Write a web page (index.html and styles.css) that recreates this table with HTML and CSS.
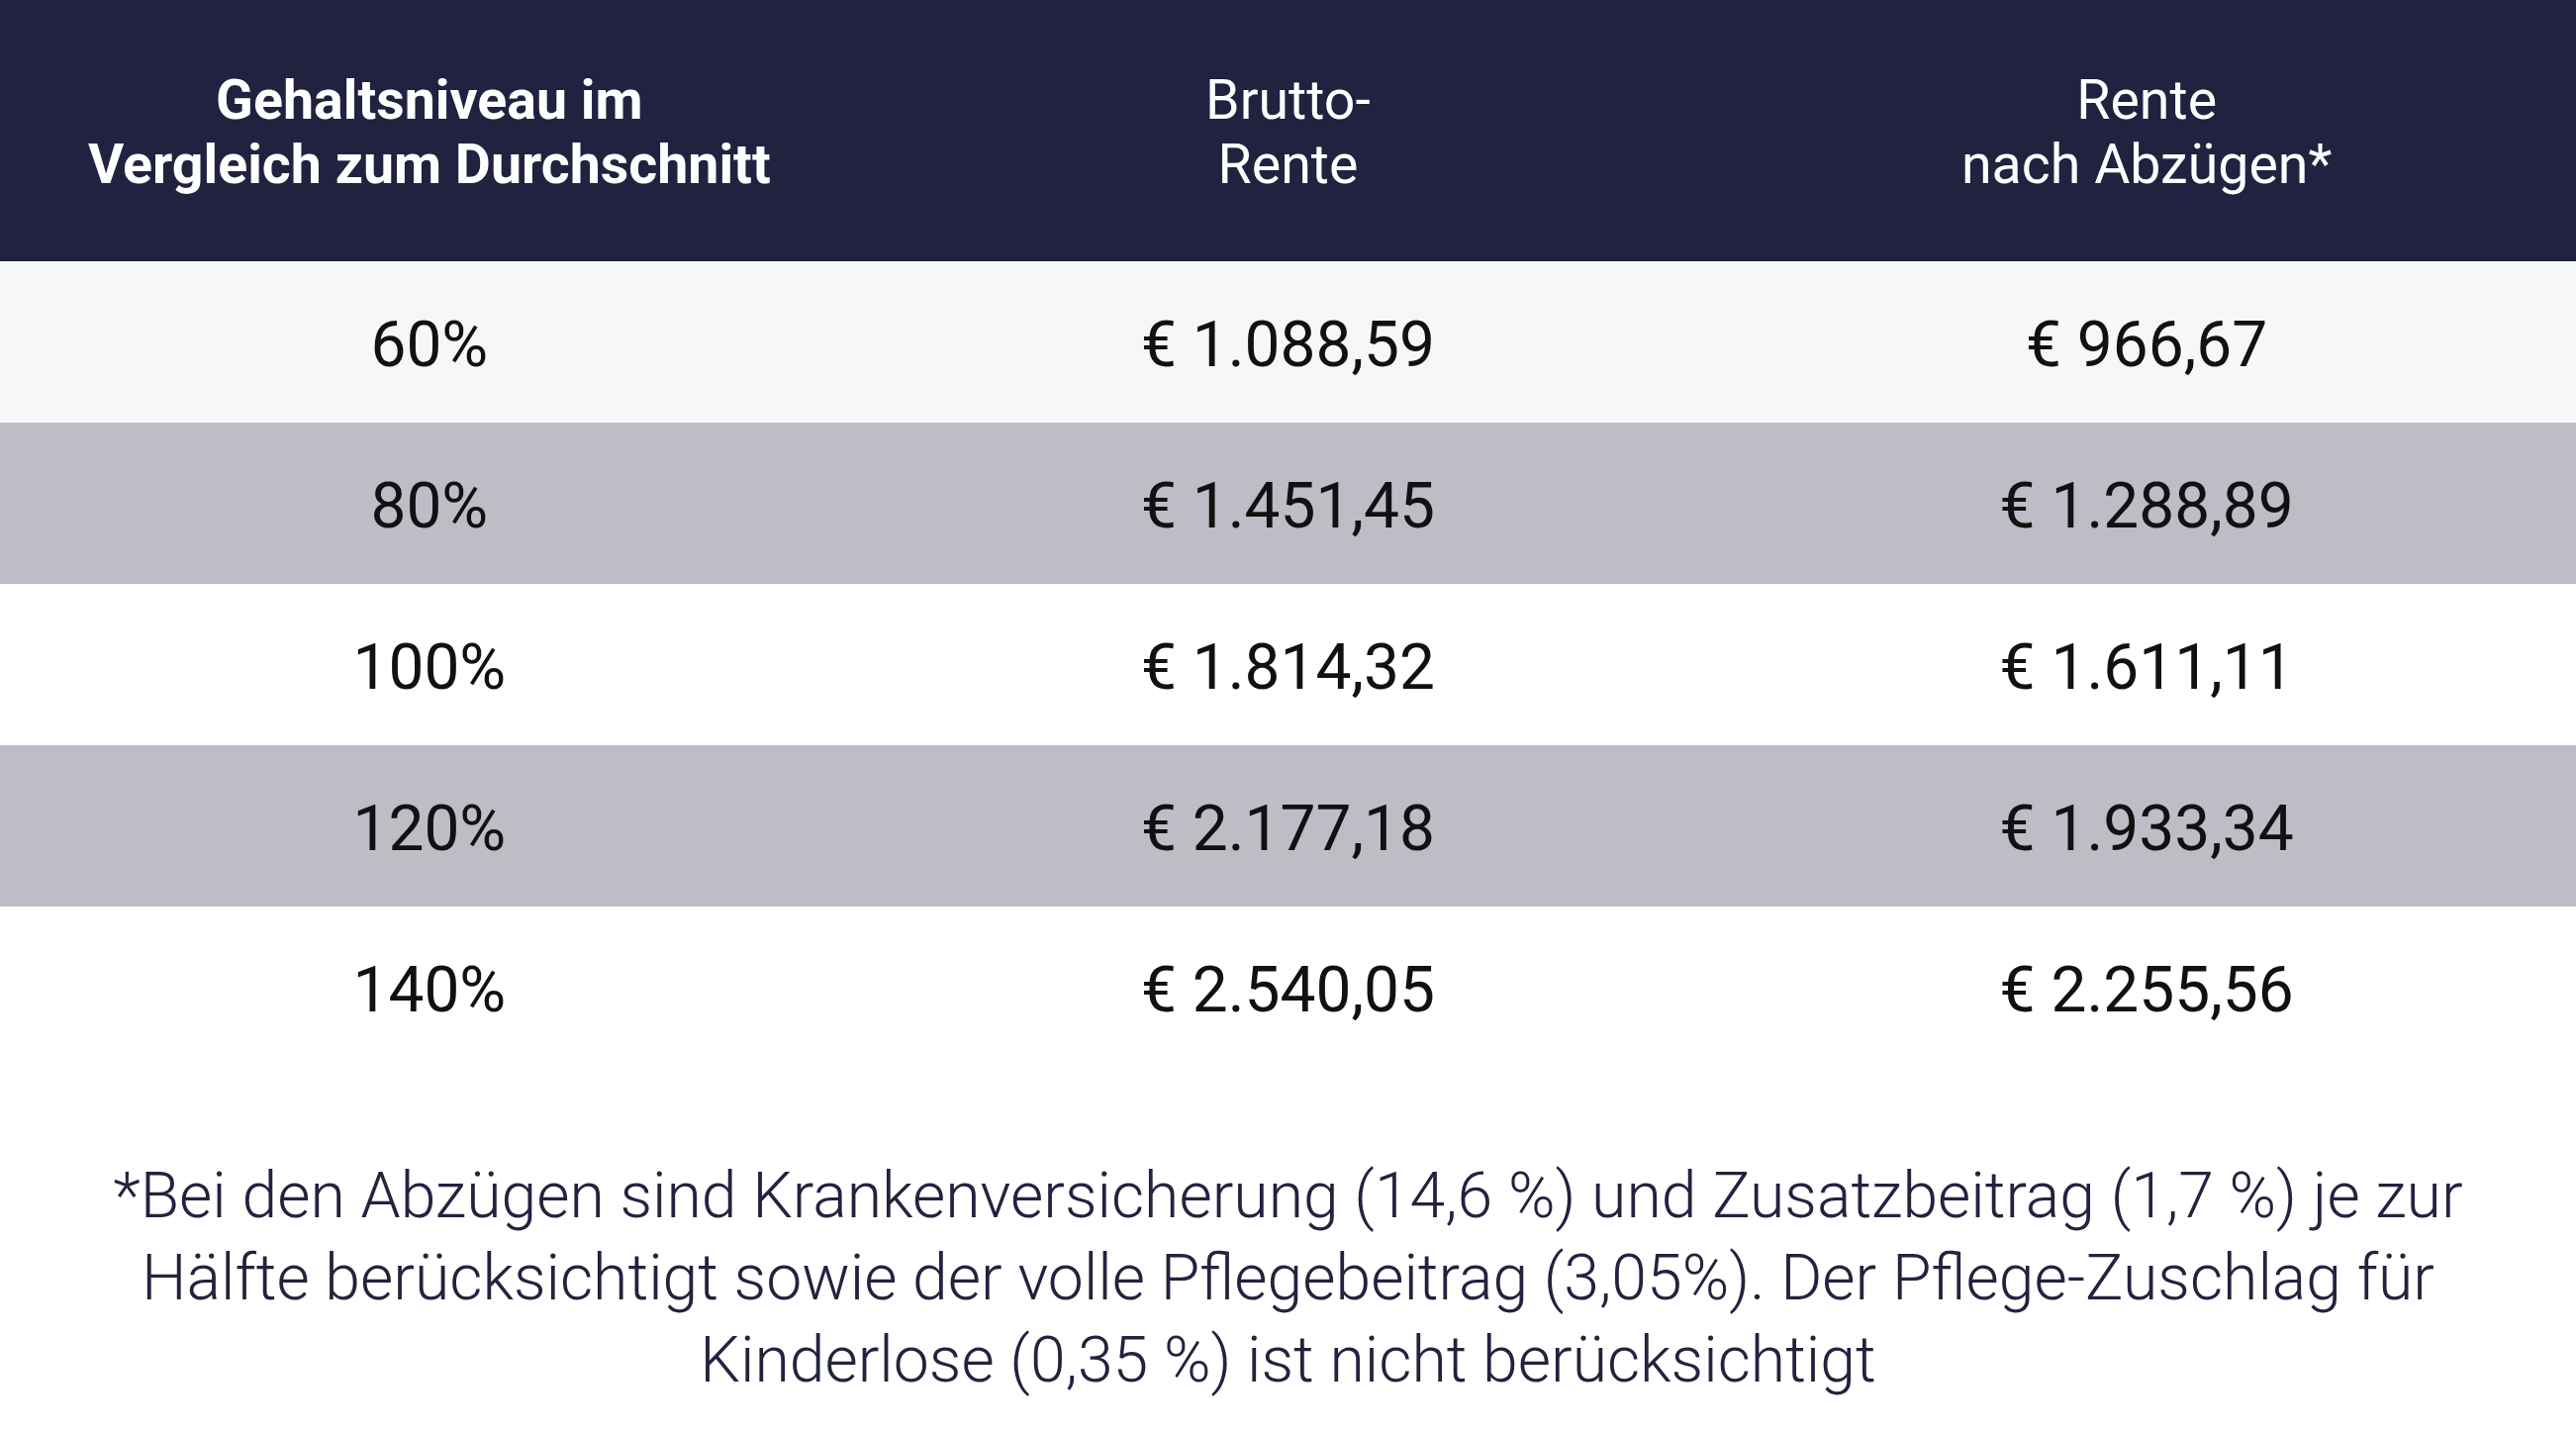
FILE: index.html
```html
<!DOCTYPE html>
<html lang="de">
<head>
<meta charset="utf-8">
<title>Rente nach Gehaltsniveau</title>
<link rel="stylesheet" href="styles.css">
</head>
<body>
<div class="table">
  <div class="row head">
    <div class="cell strong">Gehaltsniveau im<br>Vergleich zum Durchschnitt</div>
    <div class="cell">Brutto-<br>Rente</div>
    <div class="cell">Rente<br>nach Abzügen*</div>
  </div>
  <div class="row light">
    <div class="cell">60%</div>
    <div class="cell">€ 1.088,59</div>
    <div class="cell">€ 966,67</div>
  </div>
  <div class="row gray">
    <div class="cell">80%</div>
    <div class="cell">€ 1.451,45</div>
    <div class="cell">€ 1.288,89</div>
  </div>
  <div class="row white">
    <div class="cell">100%</div>
    <div class="cell">€ 1.814,32</div>
    <div class="cell">€ 1.611,11</div>
  </div>
  <div class="row gray">
    <div class="cell">120%</div>
    <div class="cell">€ 2.177,18</div>
    <div class="cell">€ 1.933,34</div>
  </div>
  <div class="row white">
    <div class="cell">140%</div>
    <div class="cell">€ 2.540,05</div>
    <div class="cell">€ 2.255,56</div>
  </div>
</div>
<p class="note">*Bei den Abzügen sind Krankenversicherung (14,6 %) und Zusatzbeitrag (1,7 %) je zur<br>Hälfte berücksichtigt sowie der volle Pflegebeitrag (3,05%). Der Pflege-Zuschlag für<br>Kinderlose (0,35 %) ist nicht berücksichtigt</p>
</body>
</html>
```
FILE: styles.css
```css
html, body {
  margin: 0;
  padding: 0;
  background: #ffffff;
}
body {
  font-family: Roboto, "Liberation Sans", sans-serif;
  width: 2603px;
  height: 1448px;
  overflow: hidden;
}
.table {
  display: flex;
  flex-direction: column;
}
.row {
  display: grid;
  grid-template-columns: 1fr 1fr 1fr;
  height: 163px;
  box-sizing: border-box;
  padding-top: 6px;
  align-items: center;
  color: #111111;
  font-size: 64px;
  line-height: 75px;
}
.row.head {
  height: 264px;
  padding-top: 4px;
  background: #20223f;
  color: #ffffff;
  font-size: 55.5px;
  line-height: 65px;
}
.row.light { background: #f6f7f9; }
.row.gray { background: #bcbdc5; }
.row.white { background: #ffffff; }
.cell {
  text-align: center;
}
.strong {
  font-weight: 700;
}
.note {
  margin: 0;
  padding-top: 88px;
  text-align: center;
  color: #22233f;
  font-weight: 300;
  font-size: 64.3px;
  line-height: 83px;
}
```
